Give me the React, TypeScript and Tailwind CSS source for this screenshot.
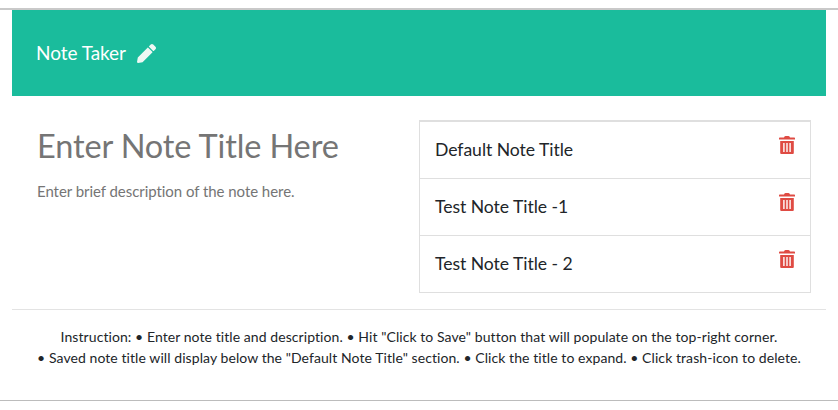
import React from "react";

const notes = ["Default Note Title", "Test Note Title -1", "Test Note Title - 2"];

function PencilIcon() {
  return (
    <svg viewBox="0 0 512 512" className="h-[19px] w-[19px] fill-[#eef8f4]" aria-hidden="true">
      <path d="M497.900 142.100l-46.100 46.100c-4.700 4.700-12.300 4.700-17 0l-111-111c-4.700-4.700-4.700-12.300 0-17l46.100-46.100c18.700-18.700 49.100-18.700 67.900 0l60.100 60.100c18.800 18.700 18.800 49.100 0 67.900zM284.200 99.800L21.600 362.400.4 483.900c-2.900 16.400 11.400 30.600 27.800 27.800l121.500-21.300 262.600-262.600c4.700-4.700 4.700-12.300 0-17l-111-111c-4.800-4.700-12.400-4.700-17.100 0z" />
    </svg>
  );
}

function TrashIcon() {
  return (
    <svg viewBox="0 0 16 18" className="h-[18px] w-4 fill-[#df4b43]" aria-hidden="true">
      <path d="M5 1.500Q5.200 0 6.500 0h3Q10.800 0 11 1.500h4.300q.7 0 .7.700v1.300H0V2.200q0-.7.700-.7z" />
      <path
        fillRule="evenodd"
        d="M1.200 5h13.600V17q0 1-1 1H2.200q-1 0-1-1zM4.200 7v9h1.400V7zM7.300 7v9h1.400V7zM10.400 7v9h1.400V7z"
      />
    </svg>
  );
}

export default function App() {
  return (
    <div className="h-[410px] bg-white pt-2 font-['Lato',sans-serif] text-[#212529] [font-variant-ligatures:none]">
      <div className="h-[393px] border-t-2 border-b border-t-[#c9c9c9] border-b-[#bcbcbc] px-3">
        <header className="flex h-[86px] items-center bg-[#1abc9c] pl-6 text-white">
          <h1 className="w-[91px] text-[19px] leading-7 tracking-[-0.05px] whitespace-nowrap">Note Taker</h1>
          <span className="ml-2.5">
            <PencilIcon />
          </span>
        </header>
        <main className="flex h-[214px] border-b border-[#e3e3e3] pt-6 pr-[15px] pl-[25px]">
          <section className="w-[382px] text-[#757575]">
            <h2 className="h-[53px] text-[32.5px] leading-[51px] tracking-[-0.13px]">Enter Note Title Here</h2>
            <p className="mt-1.5 text-[15px] leading-6 tracking-[-0.05px]">Enter brief description of the note here.</p>
          </section>
          <ul className="h-[173px] w-[392px] border-x border-t-2 border-[#dfdfdf]">
            {notes.map((note) => (
              <li key={note} className="flex h-[57px] items-start justify-between border-b border-[#dfdfdf] pr-[15px] pl-[15px]">
                <span className="pt-[14px] text-[17.6px] leading-7 tracking-[-0.05px]">{note}</span>
                <button className="mt-[14px]" aria-label="Delete note">
                  <TrashIcon />
                </button>
              </li>
            ))}
          </ul>
        </main>
        <footer className="pt-4 text-center text-[14px] leading-[21px] tracking-[0.075px]">
          <p className="whitespace-nowrap">Instruction: • Enter note title and description. • Hit "Click to Save" button that will populate on the top-right corner.</p>
          <p className="whitespace-nowrap">• Saved note title will display below the "Default Note Title" section. • Click the title to expand. • Click trash-icon to delete.</p>
        </footer>
      </div>
    </div>
  );
}
